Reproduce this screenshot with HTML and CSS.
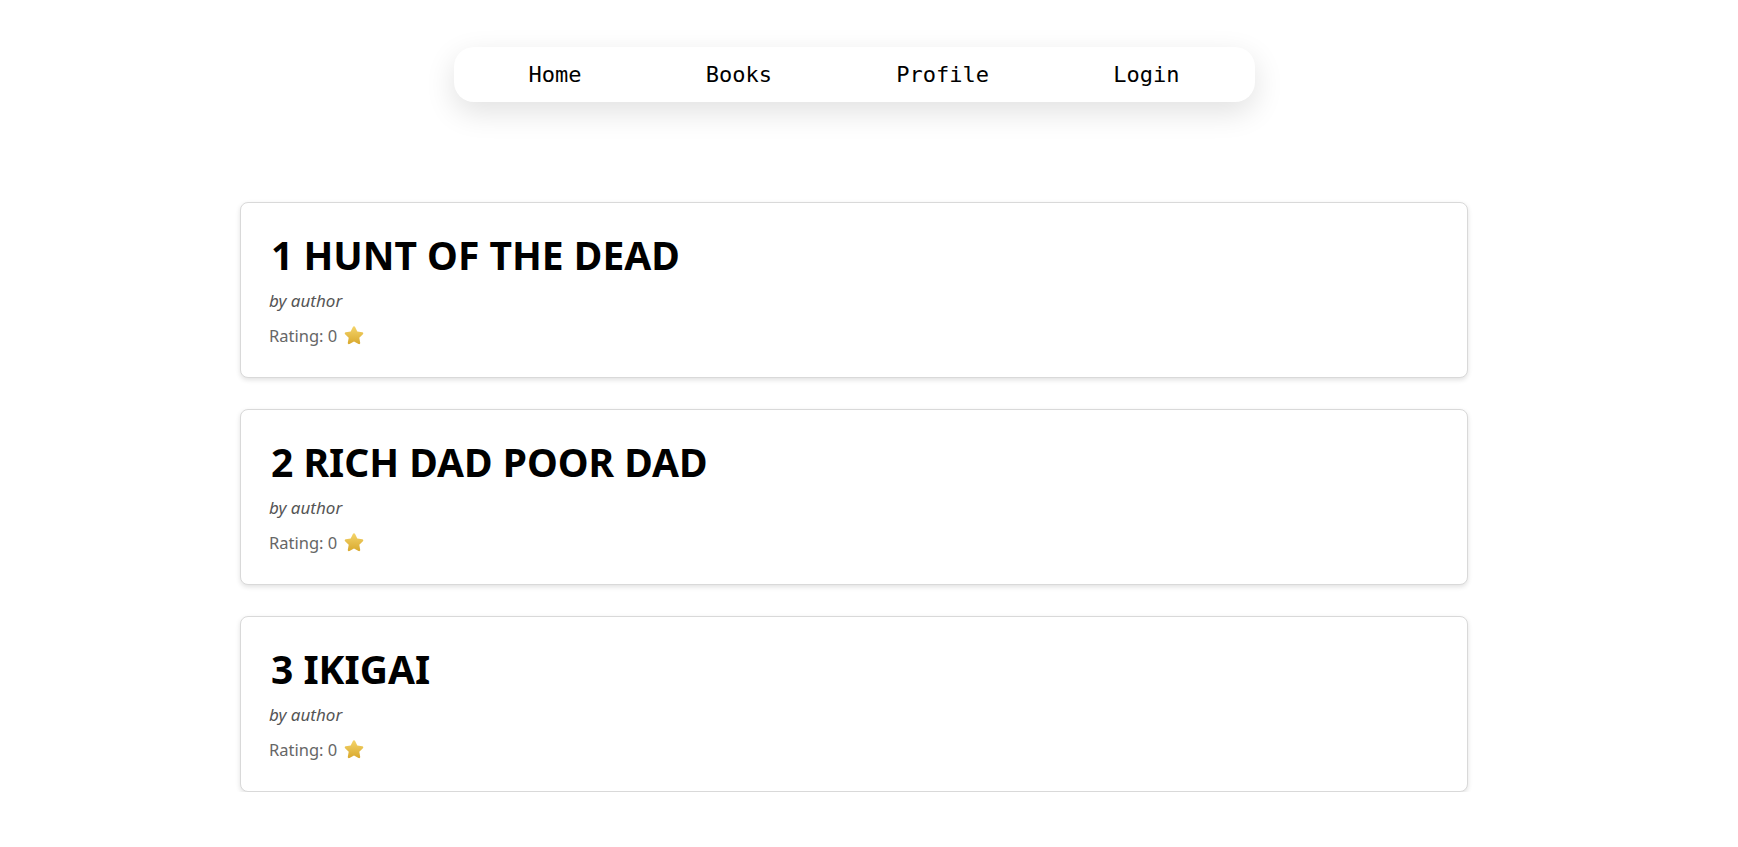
FILE: index.html
```html
<!DOCTYPE html>
<html lang="en">
<head>
<meta charset="utf-8">
<title>Books</title>
<link rel="stylesheet" href="styles.css">
</head>
<body>
<div class="page">
  <nav class="nav">
    <a class="nav-link" href="#">Home</a>
    <a class="nav-link" href="#">Books</a>
    <a class="nav-link" href="#">Profile</a>
    <a class="nav-link" href="#">Login</a>
  </nav>
  <main class="list">
    <article class="card">
      <h2 class="card-title">1 HUNT OF THE DEAD</h2>
      <p class="card-author">by author</p>
      <p class="card-rating">Rating: 0 <svg class="star" viewBox="0 0 24 24"><defs><linearGradient id="g1" x1="0" y1="0" x2="0" y2="1"><stop offset="0" stop-color="#f4d46a"/><stop offset="1" stop-color="#d9a92e"/></linearGradient></defs><path d="M12 2.2c.5 0 .9.3 1.1.8l2.2 4.6 5 .7c1 .1 1.3 1.3.6 2l-3.6 3.5.9 5c.2 1-.8 1.7-1.7 1.2L12 17.6 7.5 20c-.9.5-1.9-.2-1.7-1.2l.9-5-3.6-3.5c-.7-.7-.3-1.9.6-2l5-.7 2.2-4.6c.2-.5.6-.8 1.1-.8z" fill="url(#g1)"/></svg></p>
    </article>
    <article class="card">
      <h2 class="card-title">2 RICH DAD POOR DAD</h2>
      <p class="card-author">by author</p>
      <p class="card-rating">Rating: 0 <svg class="star" viewBox="0 0 24 24"><path d="M12 2.2c.5 0 .9.3 1.1.8l2.2 4.6 5 .7c1 .1 1.3 1.3.6 2l-3.6 3.5.9 5c.2 1-.8 1.7-1.7 1.2L12 17.6 7.5 20c-.9.5-1.9-.2-1.7-1.2l.9-5-3.6-3.5c-.7-.7-.3-1.9.6-2l5-.7 2.2-4.6c.2-.5.6-.8 1.1-.8z" fill="url(#g1)"/></svg></p>
    </article>
    <article class="card">
      <h2 class="card-title">3 IKIGAI</h2>
      <p class="card-author">by author</p>
      <p class="card-rating">Rating: 0 <svg class="star" viewBox="0 0 24 24"><path d="M12 2.2c.5 0 .9.3 1.1.8l2.2 4.6 5 .7c1 .1 1.3 1.3.6 2l-3.6 3.5.9 5c.2 1-.8 1.7-1.7 1.2L12 17.6 7.5 20c-.9.5-1.9-.2-1.7-1.2l.9-5-3.6-3.5c-.7-.7-.3-1.9.6-2l5-.7 2.2-4.6c.2-.5.6-.8 1.1-.8z" fill="url(#g1)"/></svg></p>
    </article>
  </main>
</div>
</body>
</html>
```
FILE: styles.css
```css
html, body {
  margin: 0;
  padding: 0;
  background: #ffffff;
}

.page {
  padding-right: 30px;
  padding-top: 47px;
  font-family: "Noto Sans", "Open Sans", sans-serif;
}

.nav {
  width: 801px;
  height: 55px;
  margin: 0 auto;
  box-sizing: border-box;
  padding: 0 75px 0 75px;
  display: flex;
  justify-content: space-between;
  align-items: center;
  background: #fff;
  border-radius: 20px;
  box-shadow: 0 10px 30px rgba(0, 0, 0, 0.12);
}

.nav-link {
  font-family: "DejaVu Sans Mono", monospace;
  font-size: 22px;
  color: #000;
  text-decoration: none;
}

.list {
  width: 1228px;
  margin: 100px auto 0;
  display: flex;
  flex-direction: column;
  gap: 31px;
}

.card {
  box-sizing: border-box;
  height: 176px;
  border: 1px solid #d9d9d9;
  border-radius: 8px;
  background: #fff;
  box-shadow: 0 2px 5px rgba(0, 0, 0, 0.12);
  padding: 28px 28px 28px 28px;
}

.card-title {
  margin: 0;
  padding-left: 2px;
  font-size: 39px;
  line-height: 48px;
  font-weight: 700;
  color: #000;
}

.card-author {
  margin: 11px 0 0;
  font-size: 17px;
  line-height: 22px;
  font-style: italic;
  color: #555;
}

.card-rating {
  margin: 13px 0 0;
  font-size: 16.5px;
  line-height: 22px;
  color: #666;
  display: flex;
  align-items: center;
  gap: 5px;
}

.star {
  width: 24px;
  height: 24px;
  margin: -1px 0;
}
```
